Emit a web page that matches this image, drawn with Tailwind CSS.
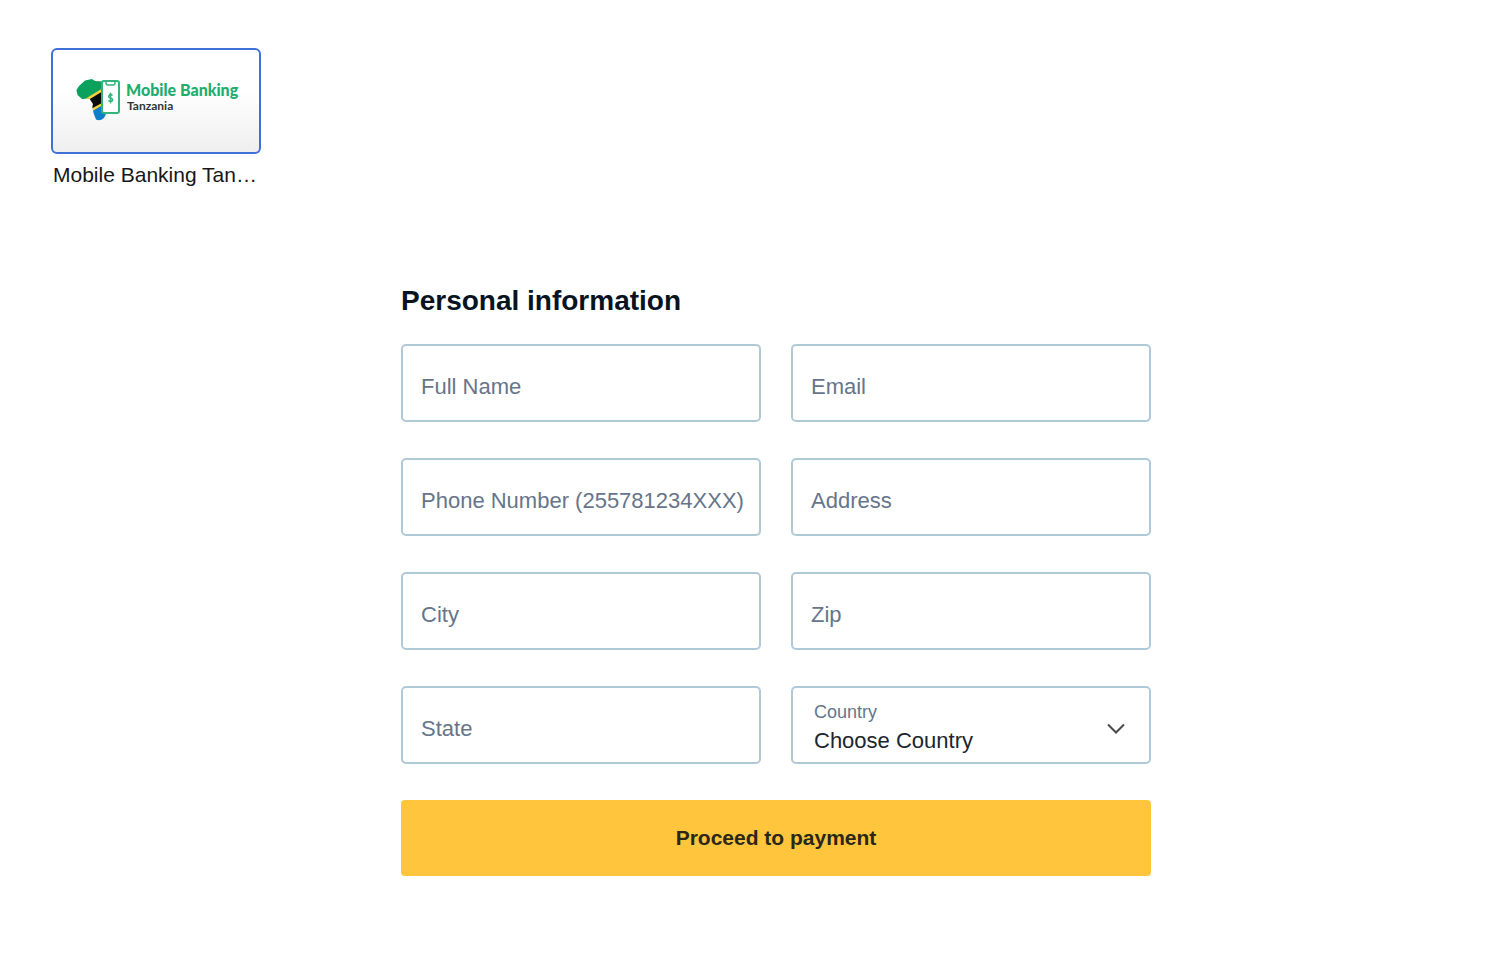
<!DOCTYPE html>
<html lang="en">
<head>
<meta charset="utf-8">
<meta name="viewport" content="width=device-width, initial-scale=1">
<title>Mobile Banking Tanzania – Payment</title>
<script src="https://cdn.jsdelivr.net/npm/@tailwindcss/browser@4"></script>
</head>
<body class="bg-white font-['Liberation_Sans',Arial,sans-serif] text-[#0b1a2b]">
<main class="pt-12 pb-20">
  <section class="px-[51px]" aria-label="Payment methods">
    <button type="button" class="block w-[210px] text-left">
      <span class="block h-[106px] rounded-md border-2 border-[#3f6fd8] bg-linear-to-b from-white from-40% to-[#efefef]">
        <svg class="block h-full w-full" viewBox="0 0 206 102" role="img" aria-label="Mobile Banking Tanzania logo">
          <defs>
            <clipPath id="africa">
              <path d="M32 30.500L39 29L42 31L50 31.500L58 41L64 43L59 54L55 61L53 64L51 68Q47 71.500 43 69.500L40.500 63L39.500 57L40 54L36.500 48.500L29 49L24.500 45L23.500 40L26 36Z"/>
            </clipPath>
          </defs>
          <g clip-path="url(#africa)">
            <path fill="#0aa15c" d="M20 25h46v15L37 54 20 52z"/>
            <path fill="#0b7fc8" d="M36 57L66 42v32H36z"/>
            <path fill="#f5d33b" d="M32 49L60 32v17L36 63z"/>
            <path fill="#080c0c" d="M32 52L60 35v12L36 60z"/>
          </g>
          <rect x="49" y="31" width="17" height="32" rx="2" fill="#fff" stroke="#34b37b" stroke-width="2"/>
          <path d="M53 32v1q0 2 2 2h5q2 0 2-2v-1" fill="none" stroke="#34b37b" stroke-width="1.5"/>
          <path d="M59.5 45.500Q57.500 43.500 56 45.500Q55 47.500 57.500 48Q60 48.500 59.500 50.500Q58 52.500 55.500 50.500M57.500 42.500v11" fill="none" stroke="#34b37b" stroke-width="1.5"/>
          <text x="73" y="46" font-family="Lato" font-weight="900" font-size="16" fill="#20ac6d">Mobile Banking</text>
          <text x="74" y="60" font-family="Lato" font-weight="700" font-size="12" fill="#333333">Tanzania</text>
        </svg>
      </span>
      <span class="mt-2 block px-0.5 text-[21px] leading-[26px] whitespace-nowrap text-[#171717]">Mobile Banking Tan…</span>
    </button>
  </section>

  <section class="mt-24 pl-[52px]">
    <form class="mx-auto max-w-[750px]">
      <h1 class="pt-px text-[28px] leading-8 font-bold text-[#07131f]">Personal information</h1>
      <div class="mt-[27px] grid grid-cols-2 gap-x-[30px] gap-y-9">
        <input type="text" aria-label="Full Name" placeholder="Full Name" class="h-[78px] w-full min-w-0 rounded-[5px] border-2 border-[#b0c9d9] pt-2 pl-[18px] text-[22px] text-[#0b1a2b] placeholder:text-[#66758a]">
        <input type="email" aria-label="Email" placeholder="Email" class="h-[78px] w-full min-w-0 rounded-[5px] border-2 border-[#b0c9d9] pt-2 pl-[18px] text-[22px] text-[#0b1a2b] placeholder:text-[#66758a]">
        <input type="tel" aria-label="Phone Number" placeholder="Phone Number (255781234XXX)" class="h-[78px] w-full min-w-0 rounded-[5px] border-2 border-[#b0c9d9] pt-2 pl-[18px] text-[22px] text-[#0b1a2b] placeholder:text-[#66758a]">
        <input type="text" aria-label="Address" placeholder="Address" class="h-[78px] w-full min-w-0 rounded-[5px] border-2 border-[#b0c9d9] pt-2 pl-[18px] text-[22px] text-[#0b1a2b] placeholder:text-[#66758a]">
        <input type="text" aria-label="City" placeholder="City" class="h-[78px] w-full min-w-0 rounded-[5px] border-2 border-[#b0c9d9] pt-2 pl-[18px] text-[22px] text-[#0b1a2b] placeholder:text-[#66758a]">
        <input type="text" aria-label="Zip" placeholder="Zip" class="h-[78px] w-full min-w-0 rounded-[5px] border-2 border-[#b0c9d9] pt-2 pl-[18px] text-[22px] text-[#0b1a2b] placeholder:text-[#66758a]">
        <input type="text" aria-label="State" placeholder="State" class="h-[78px] w-full min-w-0 rounded-[5px] border-2 border-[#b0c9d9] pt-2 pl-[18px] text-[22px] text-[#0b1a2b] placeholder:text-[#66758a]">
        <div class="relative">
          <label for="country" class="pointer-events-none absolute top-4 left-[23px] text-[18px] leading-5 text-[#66758a]">Country</label>
          <select id="country" class="h-[78px] w-full appearance-none rounded-[5px] border-2 border-[#b0c9d9] bg-transparent pt-[30px] pl-[21px] text-[22px] text-[#1c2530]">
            <option>Choose Country</option>
          </select>
          <svg class="pointer-events-none absolute top-[37px] right-[26px] h-3 w-[18px]" viewBox="0 0 18 12" fill="none" stroke="#4a4a4a" stroke-width="2" aria-hidden="true"><path d="M1 1.500L9 9.500L17 1.500"/></svg>
        </div>
      </div>
      <button type="submit" class="mt-9 block h-[76px] w-full rounded bg-[#ffc63d] text-[21px] font-bold text-[#2b2718]">Proceed to payment</button>
    </form>
  </section>
</main>
</body>
</html>
